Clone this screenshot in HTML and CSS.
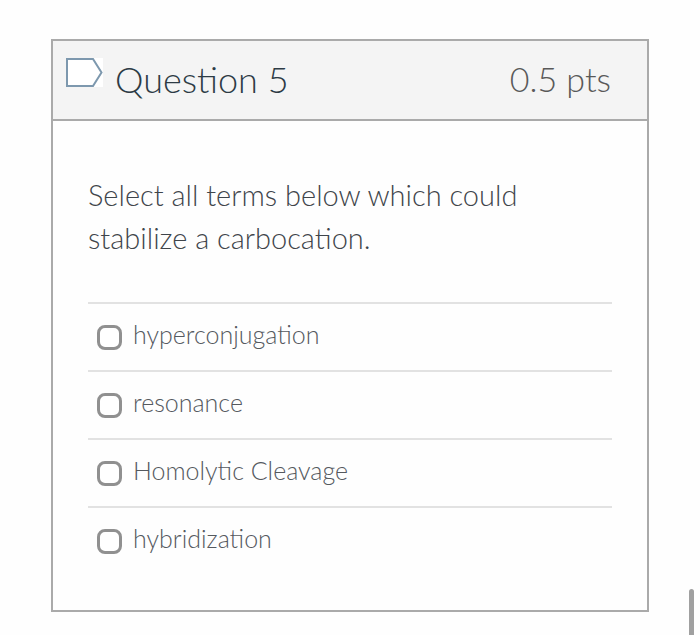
FILE: index.html
```html
<!DOCTYPE html>
<html lang="en">
<head>
    <meta charset="UTF-8">
    <meta name="viewport" content="width=device-width, initial-scale=1.0">
    <title>Question 5</title>
    <link rel="stylesheet" href="styles.css">
</head>
<body>

    <form class="question">
        <!-- Header -->
        <div class="question-header">
            <button type="button" class="flag" aria-label="Flag question">
                <svg width="37" height="29" viewBox="0 0 37 29">
                    <rect width="37" height="29" fill="#fff"/>
                    <path d="M1 1H27L35.5 14.5L27 28H1Z" fill="#fff" stroke="#7d98ae" stroke-width="2"/>
                </svg>
            </button>
            <h2 class="question-title">Question 5</h2>
            <span class="question-points">0.5 pts</span>
        </div>

        <!-- Question text and answers -->
        <div class="question-body">
            <p class="question-text" id="question-text">Select all terms below which could stabilize a carbocation.</p>
            <div class="answers" role="group" aria-labelledby="question-text">
                <div class="answer">
                    <input type="checkbox" id="answer-1">
                    <label for="answer-1">hyperconjugation</label>
                </div>
                <div class="answer">
                    <input type="checkbox" id="answer-2">
                    <label for="answer-2">resonance</label>
                </div>
                <div class="answer">
                    <input type="checkbox" id="answer-3">
                    <label for="answer-3">Homolytic Cleavage</label>
                </div>
                <div class="answer">
                    <input type="checkbox" id="answer-4">
                    <label for="answer-4">hybridization</label>
                </div>
            </div>
        </div>
    </form>

    <div class="scroll-thumb"></div>

</body>
</html>
```

FILE: styles.css
```css
body {
    font-family: Lato, 'Liberation Sans', sans-serif;
    font-weight: 300;
    margin: 0;
    padding: 39px 51px 22px;
    background-color: #fefefe;
    color: #3f454b;
}

.question {
    border: 2px solid #aaa;
}

.question-header {
    display: flex;
    align-items: center;
    padding: 14px 36px 16px 13px;
    background-color: #f4f4f4;
    border-bottom: 2px solid #aaa;
}

.flag {
    align-self: flex-start;
    margin: 3px 12px 0 0;
    padding: 0;
    border: none;
    background: none;
    cursor: pointer;
}

.flag svg {
    display: block;
}

.question-title {
    flex: 1;
    margin: 0;
    font-size: 36px;
    line-height: 48px;
    font-weight: 300;
    color: #2d3b45;
}

.question-points {
    font-size: 34px;
    line-height: 48px;
    color: #595959;
}

.question-body {
    padding: 52px 35px 36px;
}

.question-text {
    margin: 0 0 43px;
    font-size: 29px;
    line-height: 43px;
}

.answer {
    display: flex;
    align-items: center;
    gap: 11px;
    padding: 0 9px;
    border-top: 2px solid #e2e2e2;
}

.answer input {
    appearance: none;
    box-sizing: border-box;
    width: 25px;
    height: 25px;
    margin: 0;
    border: 3px solid #909090;
    border-radius: 8px;
    background-color: #fff;
}

.answer input:checked {
    background-color: #2d3b45;
}

.answer label {
    flex: 1;
    padding-bottom: 6px;
    font-size: 25px;
    line-height: 60px;
    color: #55595e;
}

/* Page scroll indicator on the right edge */
.scroll-thumb {
    position: fixed;
    right: 6px;
    bottom: 0;
    width: 5px;
    height: 46px;
    border-radius: 3px 3px 0 0;
    background-color: #a0a0a0;
}
```
